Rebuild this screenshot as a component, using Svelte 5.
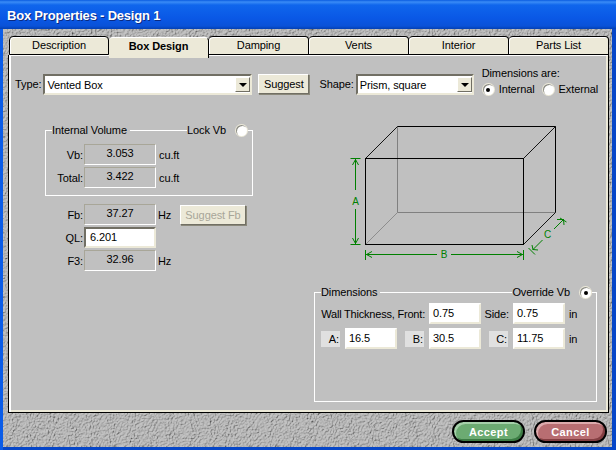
<script>
  const tabs = ['Description', 'Box Design', 'Damping', 'Vents', 'Interior', 'Parts List'];
</script>

<div class="window">
  <header class="title">Box Properties - Design 1</header>
  <div class="body">
    <svg class="texture" width="610" height="418" aria-hidden="true">
      <filter id="stone" x="0" y="0" width="100%" height="100%">
        <feTurbulence type="fractalNoise" baseFrequency="0.95 0.7" numOctaves="3" seed="11" result="n" />
        <feDiffuseLighting in="n" surfaceScale="3" diffuseConstant="1" lighting-color="#c4c4c4">
          <feDistantLight azimuth="225" elevation="60" />
        </feDiffuseLighting>
      </filter>
      <rect width="610" height="418" filter="url(#stone)" />
    </svg>

    <nav class="tabs">
      {#each tabs as tab, i}
        <div class="tab" class:active={i === 1}>{tab}</div>
      {/each}
    </nav>

    <main class="panel">
      <div class="toprow">
        <span class="lbl type">Type:</span>
        <div class="select typesel"><span>Vented Box</span><i class="drop"></i></div>
        <button class="btn suggest">Suggest</button>
        <span class="lbl shape">Shape:</span>
        <div class="select shapesel"><span>Prism, square</span><i class="drop"></i></div>
        <div class="dims-are">
          <div>Dimensions are:</div>
          <div class="radios">
            <span class="radio on"></span><span class="rlabel">Internal</span>
            <span class="radio"></span><span class="rlabel">External</span>
          </div>
        </div>
      </div>

      <div class="content">
        <div class="left">
          <section class="group volume">
            <div class="ghead">
              <span class="gl">Internal Volume</span>
              <span class="gr">Lock Vb<span class="radio"></span></span>
            </div>
            <div class="frow"><label>Vb:</label><output>3.053</output><span>cu.ft</span></div>
            <div class="frow"><label>Total:</label><output>3.422</output><span>cu.ft</span></div>
          </section>

          <div class="freq">
            <div class="frow fb">
              <label>Fb:</label><output>37.27</output><span class="unit">Hz</span>
              <button class="btn disabled">Suggest Fb</button>
            </div>
            <div class="frow"><label>QL:</label><div class="input ql">6.201</div></div>
            <div class="frow"><label>F3:</label><output>32.96</output><span class="unit">Hz</span></div>
          </div>
        </div>

        <div class="right">
          <svg class="diagram" width="240" height="160" viewBox="0 0 240 160">
            <g fill="none" stroke="#808080">
              <path d="M57.5 11.5V97.5H215.5" />
              <path d="M57.5 97.5L25.5 129.5" stroke-width=".8" />
            </g>
            <g fill="none" stroke="#000">
              <path d="M57.5 11.5H215.5V97.5" />
              <rect x="25.5" y="43.5" width="158" height="86" />
              <path d="M25.5 43.5L57.5 11.5M215.5 11.5L183.5 43.5M215.5 97.5L183.5 129.5" stroke-width=".9" />
            </g>
            <g fill="none" stroke="#008000">
              <path d="M10.5 43.5H20.5M15.5 43.5V75M15.5 94V129.5M10.5 129.5H20.5" />
              <path d="M12.5 50L15.5 44.5L18.5 50M12.5 123L15.5 128.5L18.5 123" />
              <path d="M25.5 135V145M25.5 139.5H97M111 139.5H183.5M183.5 135V145" />
              <path d="M32 136.5L26.5 139.5L32 142.5M177 136.5L182.5 139.5L177 142.5" />
              <path d="M214 114L224 104M202.5 125L192.5 135M188.5 133L195 139.500M220 103L226.500 107" />
              <path d="M192 130L193 134.500L198 135M217 104.500L223.500 104.500L224 110" />
            </g>
            <g class="dimtext">
              <text x="15.500" y="90" text-anchor="middle">A</text>
              <text x="104" y="143" text-anchor="middle">B</text>
              <text x="207.500" y="123" text-anchor="middle">C</text>
            </g>
          </svg>

          <section class="group dims">
            <div class="ghead">
              <span class="gl">Dimensions</span>
              <span class="gr">Override Vb<span class="radio on"></span></span>
            </div>
            <div class="dgrid">
              <span class="wall">Wall Thickness, Front:</span>
              <div class="input">0.75</div>
              <span class="side">Side:</span>
              <div class="input">0.75</div>
              <span class="in">in</span>

              <span class="tag">A:</span>
              <div class="input">16.5</div>
              <span class="tag mid">B:</span>
              <div class="input">30.5</div>
              <span class="tag mid">C:</span>
              <div class="input">11.75</div>
              <span class="in">in</span>
            </div>
          </section>
        </div>
      </div>
    </main>

    <footer class="foot">
      <button class="pill accept">Accept</button>
      <button class="pill cancel">Cancel</button>
    </footer>
  </div>
</div>

<style>
  :global(body) { margin: 0; background: #0a50d0; }
  .window {
    width: 616px; height: 450px; box-sizing: border-box; overflow: hidden;
    display: flex; flex-direction: column;
    padding: 0 4px 3px 3px;
    background: linear-gradient(90deg, #0a5ce8 0, #0a5ce8 3px, #0646c8 3px, #0646c8 100%);
    font: 11px "Liberation Sans", Arial, sans-serif; color: #000; letter-spacing: -.1px;
  }
  .title {
    height: 29px; margin: 0 -4px 0 -3px; padding: 1px 0 0 7px; box-sizing: border-box;
    display: flex; align-items: center;
    background: linear-gradient(180deg, #0a5ce0 0, #3a8cf6 2px, #0f66ec 5px, #0a58e6 18px, #0a52d8 26px, #0340b4 29px);
    color: #fff; font-weight: bold; font-size: 13px; letter-spacing: -.2px;
    text-shadow: 1px 1px 0 #0a2a80;
  }
  .body {
    position: relative; flex: 1; padding: 7px 0 0 5px; overflow: hidden; background: #a9a9a9;
  }
  .texture { position: absolute; left: 0; top: 0; }

  .tabs { position: relative; display: flex; height: 19px; padding-left: 1px; z-index: 2; }
  .tab {
    width: 100px; box-sizing: border-box; height: 19px;
    background: #ece9d8; border: 1px solid #000; border-left: 0;
    border-radius: 4px 4px 0 0;
    text-align: center; line-height: 17px; box-shadow: inset 1px 1px 0 #fff;
  }
  .tab:first-child { width: 100px; border-left: 1px solid #000; }
  .tab.active {
    height: 21px; font-weight: bold; border: 0; border-right: 1px solid #000;
    border-top: 1px solid #fff; margin-top: 1px; line-height: 17px;
    z-index: 3; box-shadow: none;
  }

  .panel {
    position: relative; box-sizing: border-box; width: 601px; height: 358px;
    border: 1px solid #000; border-top: 0; background: #c0c0c0;
    box-shadow: inset 2px 1px 0 #fff, inset -2px -2px 0 #ece9d8;
    padding: 19px 0 0 6px;
  }

  .toprow { display: flex; align-items: flex-start; height: 22px; }
  .lbl { line-height: 21px; }
  .select {
    box-sizing: border-box; height: 21px; display: flex; justify-content: space-between; align-items: center;
    background: #fff; border: 2px solid #716f64; border-right-color: #ece9d8; border-bottom-color: #ece9d8;
    padding-left: 2px;
  }
  .typesel { width: 209px; margin-left: 2px; }
  .shapesel { width: 118px; margin-left: 2px; }
  .drop {
    position: relative; width: 15px; height: 15px; box-sizing: border-box;
    background: #ece9d8; border: 1px solid; border-color: #fff #716f64 #716f64 #fff;
  }
  .drop::after {
    content: ""; position: absolute; left: 3px; top: 5px;
    border: 4px solid transparent; border-top: 4px solid #000; border-bottom: 0;
  }
  .btn {
    box-sizing: border-box; padding: 0; background: #ece9d8; color: #000;
    font: 11px "Liberation Sans", Arial, sans-serif; letter-spacing: -.1px;
    border: 1px solid; border-color: #fff #716f64 #716f64 #fff;
    box-shadow: 1px 1px 0 #8a887a;
  }
  .suggest { width: 51px; height: 20px; margin-left: 6px; }
  .shape { margin-left: 10px; }
  .dims-are { margin: -7px 0 0 8px; line-height: 13px; white-space: nowrap; }
  .radios { display: flex; align-items: center; margin-top: 3px; margin-left: 1px; line-height: 13px; }
  .rlabel { margin-left: 5px; }
  .rlabel:nth-child(2) { margin-right: 8px; }
  .radio {
    position: relative; display: inline-block; width: 11px; height: 11px; border-radius: 50%; background: #fff;
    box-shadow: inset 1px 1px 0 #8c8c84, 0 0 0 1px #ece9d8;
    flex: none;
  }
  .radio.on::after {
    content: ""; position: absolute; left: 3.500px; top: 3.500px; width: 4px; height: 4px; border-radius: 50%; background: #000;
  }

  .content { display: flex; }
  .left { width: 299px; }
  .group { box-sizing: border-box; border: 1px solid #fff; }
  .volume { width: 208px; height: 66px; margin: 34px 0 0 30px; }
  .ghead {
    display: flex; justify-content: space-between; height: 13px; margin: -7px 0 0 6px; line-height: 13px;
  }
  .gl { background: #c0c0c0; padding-right: 3px; }
  .gr { background: #c0c0c0; display: flex; align-items: center; margin-right: 5px; }
  .gr .radio { margin-left: 10px; }

  .frow { display: flex; align-items: center; height: 23px; }
  .frow label { text-align: right; width: 38px; margin-right: 1px; flex: none; }
  .frow output, .input { box-sizing: border-box; height: 21px; }
  .frow output {
    width: 72px; text-align: center; line-height: 17px;
    border: 1px solid; border-color: #a8a698 #fff #fff #a8a698;
    margin-right: 3px;
  }
  .volume .ghead + .frow { margin-top: 6px; }
  .volume .frow label { margin-left: -1px; }
  .freq { margin: 7px 0 0 30px; }
  .fb .btn { width: 66px; height: 20px; margin-left: 8px; }
  .unit { width: 14px; margin-left: -1px; }
  .disabled { color: #a8a698; }
  .input {
    width: 52px; background: #fff; padding-left: 2px; line-height: 17px;
    border: 2px solid; border-color: #fff #ece9d8 #ece9d8 #fff;
  }
  .input.ql { width: 72px; padding-left: 4px; border-color: #716f64 #ece9d8 #ece9d8 #716f64; }

  .diagram { display: block; margin: 19px 0 0 26px; }
  .dimtext { font: 10px "Liberation Sans", Arial, sans-serif; fill: #008000; }
  .dims { width: 283px; height: 110px; margin-top: 17px; }
  .dgrid {
    display: grid; grid-template-columns: 24px 52px 32px 52px 32px 52px auto;
    grid-auto-rows: 21px; row-gap: 4px; align-items: center;
    margin: 4px 0 0 6px;
  }
  .wall { grid-column: 1 / 4; text-align: right; padding-right: 4px; white-space: nowrap; letter-spacing: -.2px; }
  .side { text-align: right; padding-right: 4px; }
  .in { padding-left: 4px; }
  .tag { background: #e0e0e0; height: 16px; line-height: 16px; text-align: right; margin-right: 5px; padding-right: 1px; }
  .tag.mid { margin-left: 8px; }

  .foot { position: relative; display: flex; justify-content: flex-end; gap: 9px; margin-top: 7px; padding-right: 5px; }
  .pill {
    width: 73px; height: 23px; box-sizing: border-box; padding: 0; border-radius: 12px; border: 2px solid #000;
    color: #fff; font: bold 11px "Liberation Sans", Arial, sans-serif; letter-spacing: .4px;
  }
  .accept { background: #6cab72; box-shadow: inset 2px 2px 0 #a6d0aa, inset -2px -2px 0 #3c7c44; }
  .cancel { background: #b86e72; box-shadow: inset 2px 2px 0 #dcaaac, inset -2px -2px 0 #843e42; }
</style>
